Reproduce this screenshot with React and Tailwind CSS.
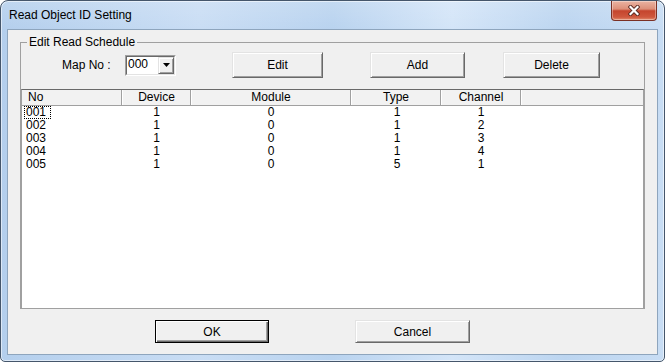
import React from "react";

const rows = [
  ["001", "1", "0", "1", "1"],
  ["002", "1", "0", "1", "2"],
  ["003", "1", "0", "1", "3"],
  ["004", "1", "0", "1", "4"],
  ["005", "1", "0", "5", "1"],
];

const btn =
  "flex items-center justify-center border border-t-[#e3e3e3] border-l-[#e3e3e3] border-r-[#696969] border-b-[#696969] bg-[#f0f0f0] shadow-[inset_1px_1px_0_#ffffff,inset_-1px_-1px_0_#a0a0a0] text-[12px] leading-[14px] text-black";

const defBtn =
  "flex items-center justify-center border border-[#000000] bg-[#f0f0f0] shadow-[inset_1px_1px_0_#ffffff,inset_-1px_-1px_0_#696969,inset_-2px_-2px_0_#a0a0a0] text-[12px] leading-[14px] text-black";

export default function App() {
  return (
    <div className="h-[362px] w-[665px] overflow-hidden bg-white font-['Liberation_Sans',Arial,sans-serif]">
      <div className="flex h-full w-full flex-col rounded-t-[8px] rounded-b-[5px] border border-[#45566b] bg-[linear-gradient(180deg,rgba(255,255,255,0.15)_0px,rgba(255,255,255,0)_28px),linear-gradient(90deg,#b4cfed_0%,#c9ddf4_30%,#b9d3ef_50%,#d4e5f8_68%,#bcd5f0_85%,#c8ddf4_100%)] shadow-[inset_0_0_0_1px_rgba(255,255,255,0.55)]">
        {/* title bar */}
        <div className="flex h-[28px] shrink-0 items-start">
          <div className="pl-[8px] pt-[7px] text-[12px] leading-[14px] text-black">
            Read Object ID Setting
          </div>
          <div className="ml-auto mr-[7px] flex h-[20px] w-[46px] items-center justify-center rounded-b-[4px] border border-t-0 border-[#7a3024] bg-[linear-gradient(180deg,#eab3a2_0%,#dd8f79_42%,#c5452d_52%,#cf583e_85%,#e28e6f_100%)] shadow-[inset_0_0_0_1px_rgba(255,255,255,0.35)]">
            <svg width="12" height="11" viewBox="0 0 12 11">
              <path d="M2.5 2 L9.5 9 M9.5 2 L2.5 9" stroke="#5a2a22" strokeWidth="4" strokeLinecap="square" />
              <path d="M2.5 2 L9.5 9 M9.5 2 L2.5 9" stroke="#ffffff" strokeWidth="2.2" strokeLinecap="square" />
            </svg>
          </div>
        </div>

        {/* client area */}
        <div className="mx-[6px] mb-[6px] flex flex-1 flex-col border border-[#8ea5bd] bg-[#f0f0f0] text-[12px] text-black">
          <fieldset className="ml-[12px] mt-[5px] w-[624px] border border-[#a0a0a0]">
            <legend className="ml-[6px] px-[2px] text-[12px] leading-[14px]">Edit Read Schedule</legend>

            {/* toolbar */}
            <div className="mt-[3px] flex h-[26px] items-center">
              <div className="ml-[41px] w-[63px] leading-[14px]">Map No :</div>
              <div className="flex h-[21px] w-[51px] border border-t-[#a0a0a0] border-l-[#a0a0a0] border-r-white border-b-white">
                <div className="flex flex-1 border border-t-[#696969] border-l-[#696969] border-r-[#e3e3e3] border-b-[#e3e3e3] bg-white">
                  <div className="flex-1 pl-[1px] pt-[1px] leading-[13px]">000</div>
                  <div className="flex w-[16px] items-center justify-center border border-t-[#e3e3e3] border-l-[#e3e3e3] border-r-[#696969] border-b-[#696969] bg-[#f0f0f0] shadow-[inset_1px_1px_0_#ffffff,inset_-1px_-1px_0_#a0a0a0]">
                    <svg width="7" height="4" viewBox="0 0 7 4">
                      <path d="M0 0 H7 L3.5 4 Z" fill="#000" />
                    </svg>
                  </div>
                </div>
              </div>
              <div className={`ml-[56px] h-[26px] w-[91px] ${btn}`}>Edit</div>
              <div className={`ml-[47px] h-[26px] w-[95px] ${btn}`}>Add</div>
              <div className={`ml-[38px] h-[26px] w-[97px] ${btn}`}>Delete</div>
            </div>

            {/* list view */}
            <div className="-mb-[1px] mt-[11px] flex h-[220px] w-[623px] flex-col border border-[#a0a0a0] border-t-[#696969] bg-white">
              <div className="flex h-[16px] shrink-0 border-b border-[#a0a0a0] bg-[#f2f2f2] leading-[15px]">
                <div className="w-[100px] shrink-0 border-r border-[#a0a0a0] pl-[6px]">No</div>
                <div className="w-[69px] shrink-0 border-l border-r border-l-white border-r-[#a0a0a0] text-center">Device</div>
                <div className="w-[160px] shrink-0 border-l border-r border-l-white border-r-[#a0a0a0] text-center">Module</div>
                <div className="w-[90px] shrink-0 border-l border-r border-l-white border-r-[#a0a0a0] text-center">Type</div>
                <div className="w-[80px] shrink-0 border-l border-r border-l-white border-r-[#a0a0a0] text-center">Channel</div>
                <div className="flex-1 border-l border-l-white" />
              </div>
              {rows.map((r, i) => (
                <div key={r[0]} className="flex h-[13px] leading-[13px]">
                  <div className="w-[100px] shrink-0 pl-[2px]">
                    <span
                      className={`block h-[13px] w-[27px] border pl-[1px] leading-[11px] ${
                        i === 0 ? "border-dotted border-black" : "border-transparent"
                      }`}
                    >
                      {r[0]}
                    </span>
                  </div>
                  <div className="w-[69px] shrink-0 text-center">{r[1]}</div>
                  <div className="w-[160px] shrink-0 text-center">{r[2]}</div>
                  <div className="w-[90px] shrink-0 pl-[2px] text-center">{r[3]}</div>
                  <div className="w-[80px] shrink-0 text-center">{r[4]}</div>
                </div>
              ))}
            </div>
          </fieldset>

          {/* bottom buttons */}
          <div className="mt-[11px] flex">
            <div className={`ml-[147px] h-[23px] w-[114px] ${defBtn}`}>OK</div>
            <div className={`ml-[86px] h-[23px] w-[115px] ${btn}`}>Cancel</div>
          </div>
        </div>
      </div>
    </div>
  );
}
